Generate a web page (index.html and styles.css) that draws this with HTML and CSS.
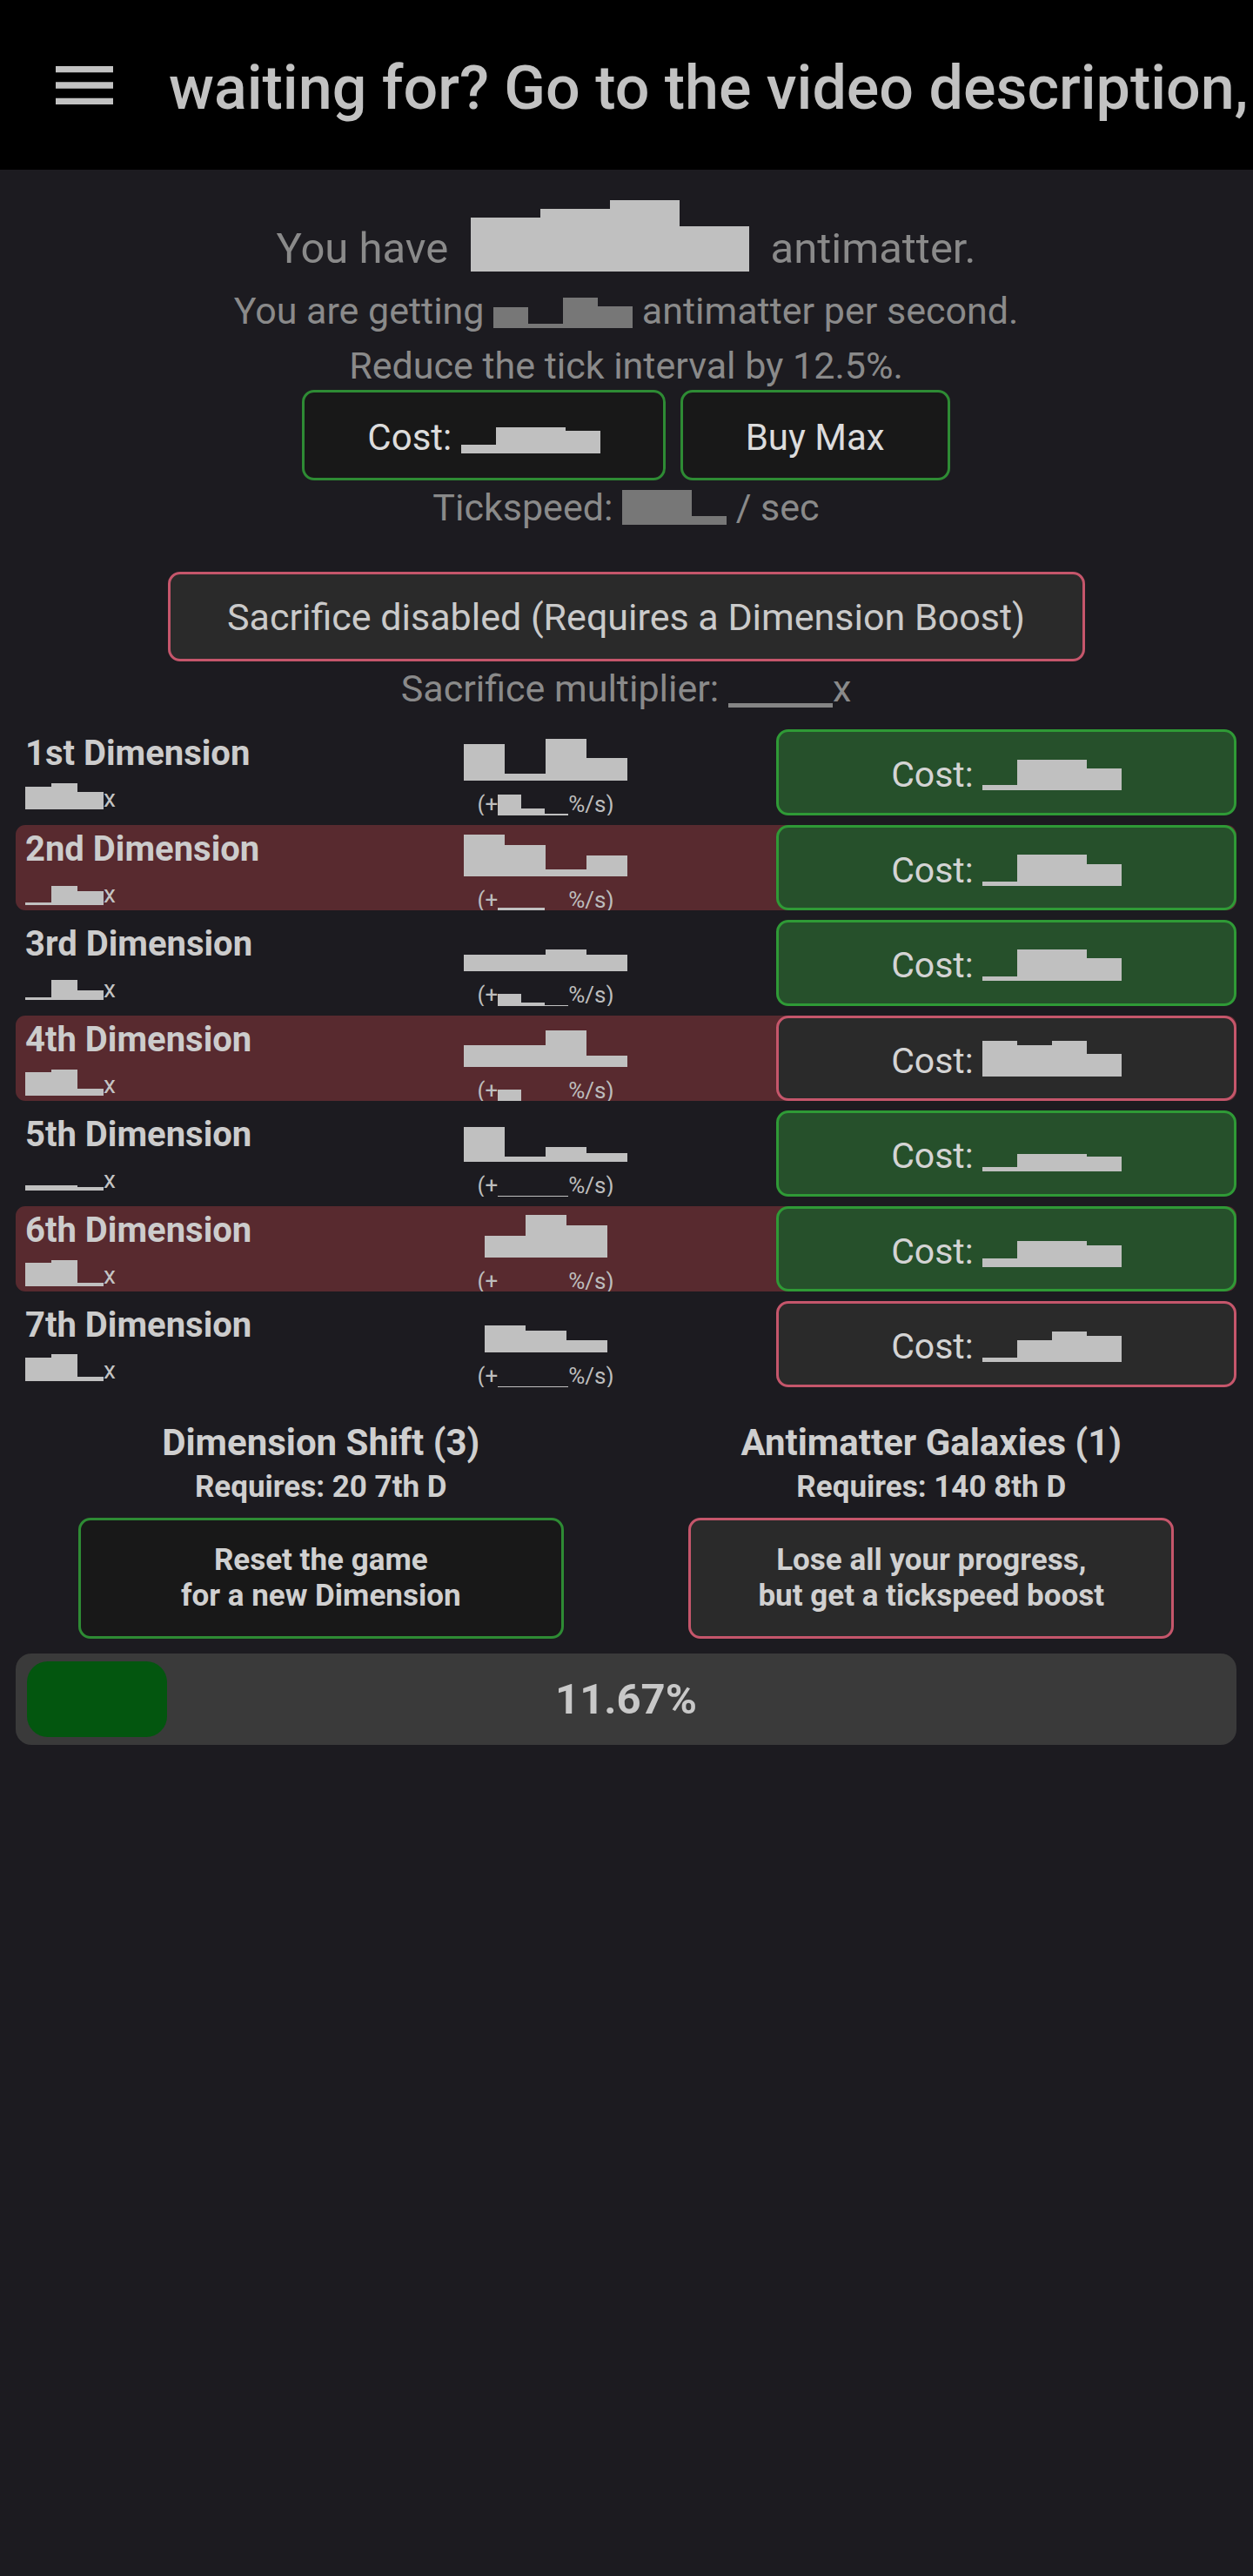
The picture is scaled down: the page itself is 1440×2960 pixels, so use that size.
FILE: index.html
```html
<!DOCTYPE html>
<html lang="en">
<head>
<meta charset="utf-8">
<title>Antimatter Dimensions</title>
<link rel="stylesheet" href="styles.css">
</head>
<body>
<header class="header">
  <svg class="menu" viewBox="0 0 24 24" aria-hidden="true"><path d="M3 18h18v-2H3v2zm0-5h18v-2H3v2zm0-7v2h18V6H3z" fill="#c2c2c2"/></svg>
  <div class="ticker">waiting for? Go to the video description, and click the link to get started!</div>
</header>
<main class="main">
  <section class="stats">
    <div class="l1">You have <span class="rd rd-am"><i style="height:62px"></i><i style="height:72px"></i><i style="height:82px"></i><i style="height:52px"></i></span> antimatter.</div>
    <div class="l2">You are getting <span class="rd rd-g"><i style="height:24px"></i><i style="height:5px"></i><i style="height:35px"></i><i style="height:25px"></i></span> antimatter per second.</div>
    <div class="l3">Reduce the tick interval by 12.5%.</div>
    <div class="tick-btns">
      <button class="btn btn-top ok"><span>Cost: <span class="rd rd-c"><i style="height:10px"></i><i style="height:30px"></i><i style="height:30px"></i><i style="height:26px"></i></span></span></button>
      <button class="btn btn-top ok"><span>Buy Max</span></button>
    </div>
    <div class="tickspeed">Tickspeed: <span class="rd rd-g"><i style="height:40px"></i><i style="height:40px"></i><i style="height:10px"></i></span> / sec</div>
    <button class="btn sac no"><span>Sacrifice disabled (Requires a Dimension Boost)</span></button>
    <div class="sacmult">Sacrifice multiplier: <span class="rd rd-s"><i style="height:5px"></i><i style="height:5px"></i><i style="height:5px"></i><i style="height:5px"></i></span>x</div>
  </section>

  <section class="dims">
    <div class="row">
      <div class="name"><div class="nm">1st Dimension</div><div class="mult"><span class="rd rd-m"><i style="height:26px"></i><i style="height:30px"></i><i style="height:20px"></i></span>x</div></div>
      <div class="amt"><div class="amtv"><i style="height:42px"></i><i style="height:8px"></i><i style="height:48px"></i><i style="height:26px"></i></div><div class="rate">(+<span class="rd rd-r"><i style="height:24px"></i><i style="height:8px"></i><i style="height:2px"></i></span>%/s)</div></div>
      <button class="btn buy ok"><span>Cost: <span class="rd rd-c"><i style="height:6px"></i><i style="height:35px"></i><i style="height:35px"></i><i style="height:25px"></i></span></span></button>
    </div>
    <div class="row red">
      <div class="name"><div class="nm">2nd Dimension</div><div class="mult"><span class="rd rd-m"><i style="height:3px"></i><i style="height:22px"></i><i style="height:16px"></i></span>x</div></div>
      <div class="amt"><div class="amtv"><i style="height:48px"></i><i style="height:36px"></i><i style="height:8px"></i><i style="height:24px"></i></div><div class="rate">(+<span class="rd rd-r"><i style="height:4px"></i><i style="height:4px"></i><i style="height:1px"></i></span>%/s)</div></div>
      <button class="btn buy ok"><span>Cost: <span class="rd rd-c"><i style="height:5px"></i><i style="height:36px"></i><i style="height:36px"></i><i style="height:25px"></i></span></span></button>
    </div>
    <div class="row">
      <div class="name"><div class="nm">3rd Dimension</div><div class="mult"><span class="rd rd-m"><i style="height:3px"></i><i style="height:23px"></i><i style="height:11px"></i></span>x</div></div>
      <div class="amt"><div class="amtv"><i style="height:19px"></i><i style="height:19px"></i><i style="height:25px"></i><i style="height:19px"></i></div><div class="rate">(+<span class="rd rd-r"><i style="height:14px"></i><i style="height:4px"></i><i style="height:1px"></i></span>%/s)</div></div>
      <button class="btn buy ok"><span>Cost: <span class="rd rd-c"><i style="height:5px"></i><i style="height:36px"></i><i style="height:36px"></i><i style="height:26px"></i></span></span></button>
    </div>
    <div class="row red">
      <div class="name"><div class="nm">4th Dimension</div><div class="mult"><span class="rd rd-m"><i style="height:27px"></i><i style="height:30px"></i><i style="height:8px"></i></span>x</div></div>
      <div class="amt"><div class="amtv"><i style="height:25px"></i><i style="height:25px"></i><i style="height:42px"></i><i style="height:13px"></i></div><div class="rate">(+<span class="rd rd-r"><i style="height:14px"></i><i style="height:1px"></i><i style="height:1px"></i></span>%/s)</div></div>
      <button class="btn buy no"><span>Cost: <span class="rd rd-c"><i style="height:41px"></i><i style="height:36px"></i><i style="height:41px"></i><i style="height:26px"></i></span></span></button>
    </div>
    <div class="row">
      <div class="name"><div class="nm">5th Dimension</div><div class="mult"><span class="rd rd-m"><i style="height:6px"></i><i style="height:6px"></i><i style="height:4px"></i></span>x</div></div>
      <div class="amt"><div class="amtv"><i style="height:40px"></i><i style="height:6px"></i><i style="height:17px"></i><i style="height:10px"></i></div><div class="rate">(+<span class="rd rd-r"><i style="height:1px"></i><i style="height:1px"></i><i style="height:1px"></i></span>%/s)</div></div>
      <button class="btn buy ok"><span>Cost: <span class="rd rd-c"><i style="height:5px"></i><i style="height:20px"></i><i style="height:20px"></i><i style="height:17px"></i></span></span></button>
    </div>
    <div class="row red">
      <div class="name"><div class="nm">6th Dimension</div><div class="mult"><span class="rd rd-m"><i style="height:27px"></i><i style="height:30px"></i><i style="height:4px"></i></span>x</div></div>
      <div class="amt"><div class="amtv"><i style="height:25px"></i><i style="height:49px"></i><i style="height:37px"></i></div><div class="rate">(+<span class="rd rd-r"><i style="height:1px"></i><i style="height:1px"></i><i style="height:1px"></i></span>%/s)</div></div>
      <button class="btn buy ok"><span>Cost: <span class="rd rd-c"><i style="height:10px"></i><i style="height:30px"></i><i style="height:30px"></i><i style="height:25px"></i></span></span></button>
    </div>
    <div class="row">
      <div class="name"><div class="nm">7th Dimension</div><div class="mult"><span class="rd rd-m"><i style="height:27px"></i><i style="height:31px"></i><i style="height:5px"></i></span>x</div></div>
      <div class="amt"><div class="amtv"><i style="height:31px"></i><i style="height:25px"></i><i style="height:14px"></i></div><div class="rate">(+<span class="rd rd-r"><i style="height:1px"></i><i style="height:1px"></i><i style="height:1px"></i></span>%/s)</div></div>
      <button class="btn buy no"><span>Cost: <span class="rd rd-c"><i style="height:5px"></i><i style="height:25px"></i><i style="height:35px"></i><i style="height:30px"></i></span></span></button>
    </div>
  </section>

  <section class="resets">
    <div class="reset">
      <div class="rt">Dimension Shift (3)</div>
      <div class="rq">Requires: 20 7th D</div>
      <button class="btn rbtn dark ok"><span>Reset the game<br>for a new Dimension</span></button>
    </div>
    <div class="reset">
      <div class="rt">Antimatter Galaxies (1)</div>
      <div class="rq">Requires: 140 8th D</div>
      <button class="btn rbtn no"><span>Lose all your progress,<br>but get a tickspeed boost</span></button>
    </div>
  </section>

  <div class="progress">
    <div class="fill" style="width:11.67%"></div>
    <div class="ptext">11.67%</div>
  </div>
</main>
</body>
</html>
```

FILE: styles.css
```css
* { box-sizing: border-box; }

body {
  margin: 0;
  background: #1c1b20;
  font-family: Roboto, "Noto Sans", "Liberation Sans", sans-serif;
  color: #8a8a8a;
}

.header {
  height: 195px;
  background: #000;
  display: flex;
  align-items: center;
  overflow: hidden;
}

.menu {
  flex: none;
  width: 88px;
  height: 88px;
  margin-left: 53px;
}

.ticker {
  flex: none;
  margin-left: 53px;
  padding-top: 6px;
  white-space: nowrap;
  font-size: 70px;
  font-weight: 500;
  line-height: 82px;
  color: #c2c2c2;
}

.main {
  padding: 0 19px 0 18px;
}

/* redacted numbers */
.rd {
  display: inline-flex;
  align-items: flex-end;
  margin-top: -200px;
  vertical-align: -5px;
}
.rd i {
  display: block;
  width: var(--w);
  background: var(--c);
}
.rd-am { --w: 80px; --c: #c0c0c0; vertical-align: -10px; margin-left: 14px; margin-right: 12px; }
.rd-g { --w: 40px; --c: #777777; }
.rd-c { --w: 40px; --c: #c0c0c0; vertical-align: -4px; }
.rd-s { --w: 30px; --c: #858585; vertical-align: -7px; }
.rd-m { --w: 30px; --c: #c0c0c0; vertical-align: -3px; }
.rd-r { --w: 27px; --c: #c0c0c0; vertical-align: -4px; }

.stats {
  padding-top: 54px;
  text-align: center;
}
.l1 { font-size: 49px; line-height: 73px; }
.l2 { font-size: 43px; line-height: 70px; }
.l3 { font-size: 43px; line-height: 56px; }

.tick-btns {
  display: flex;
  justify-content: center;
  gap: 17px;
  height: 104px;
}

.btn {
  display: flex;
  align-items: center;
  justify-content: center;
  font-family: inherit;
  border: 3px solid #2e8b34;
  border-radius: 14px;
  color: #dcdcdc;
  background: #181818;
  padding: 0;
  margin: 0;
}
.btn.no { border-color: #c5566b; background: #2a2a2a; }

.btn-top {
  height: 104px;
  padding: 4px 72px 0;
  font-size: 42px;
  line-height: 49px;
}

.tickspeed { font-size: 43px; line-height: 63px; }

.sac {
  width: 1054px;
  height: 103px;
  margin: 42px auto 0;
  padding-top: 2px;
  font-size: 43px;
  line-height: 49px;
  color: #cacaca;
}

.sacmult { font-size: 43px; line-height: 63px; }

.dims {
  margin-top: 15px;
  display: flex;
  flex-direction: column;
  gap: 11px;
}

.row {
  display: grid;
  grid-template-columns: 344px 530px 1fr;
  height: 98.5px;
  border-radius: 11px;
  overflow: hidden;
  color: #cccccc;
}
.row.red { background: #582a2f; }

.name {
  padding: 4px 0 0 11px;
}
.nm {
  font-size: 40px;
  font-weight: 700;
  line-height: 48px;
  white-space: nowrap;
}
.mult {
  font-size: 28px;
  line-height: 56px;
  color: #c4c4c4;
}

.amt {
  text-align: center;
}
.amtv {
  height: 59px;
  display: flex;
  justify-content: center;
  align-items: flex-end;
}
.amtv i {
  display: block;
  width: 47px;
  background: #c0c0c0;
}
.rate {
  font-size: 26px;
  line-height: 54px;
  color: #bdbdbd;
}

.buy {
  height: 98.5px;
  padding-top: 6px;
  border-color: #2f9a36;
  background: #26502b;
  font-size: 41px;
  line-height: 48px;
  color: #d4d4d4;
}
.buy.no { border-color: #c5566b; background: #2a2a2a; }

.resets {
  margin-top: 39px;
  display: grid;
  grid-template-columns: 1fr 1fr;
  text-align: center;
  color: #cfcfcf;
  font-weight: 700;
}
.reset {
  display: flex;
  flex-direction: column;
  align-items: center;
}
.rt { font-size: 42px; line-height: 50px; }
.rq { font-size: 35px; line-height: 52px; }

.rbtn {
  width: 558px;
  height: 139px;
  margin-top: 9px;
  font-size: 35px;
  font-weight: 700;
  line-height: 41px;
  color: #d0d0d0;
}
.rbtn.dark { background: #181818; }

.progress {
  margin-top: 17px;
  height: 105px;
  border-radius: 18px;
  background: #3a3a3a;
  padding: 9px 13px;
  display: grid;
  align-items: center;
}
.fill {
  grid-area: 1 / 1;
  height: 87px;
  border-radius: 24px;
  background: #03560f;
  justify-self: start;
}
.ptext {
  grid-area: 1 / 1;
  justify-self: center;
  font-size: 49px;
  font-weight: 700;
  color: #c8c8c8;
}
```
